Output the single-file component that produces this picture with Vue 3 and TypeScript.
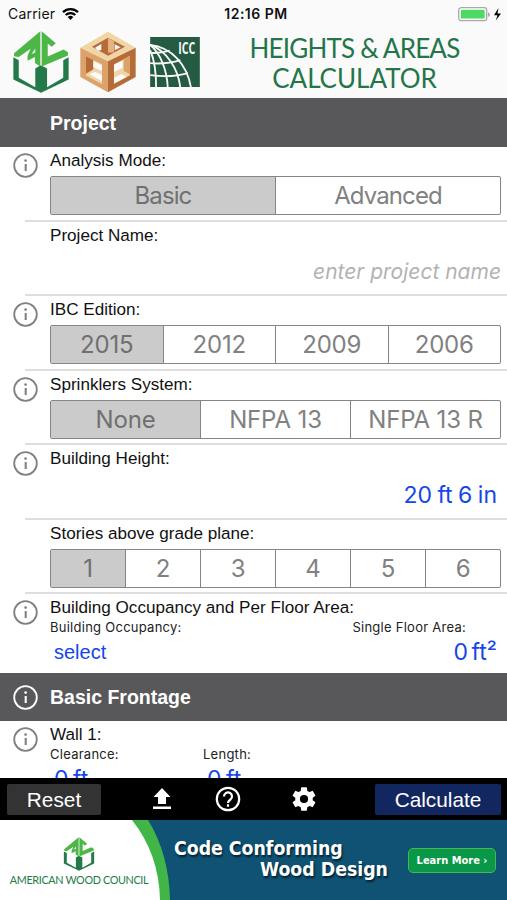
<script setup lang="ts">
interface Row {
  label: string
  info: boolean
  options?: string[]
  value?: string
  placeholder?: string
}
const rows: Row[] = [
  { label: 'Analysis Mode:', info: true, options: ['Basic', 'Advanced'] },
  { label: 'Project Name:', info: false, placeholder: 'enter project name' },
  { label: 'IBC Edition:', info: true, options: ['2015', '2012', '2009', '2006'] },
  { label: 'Sprinklers System:', info: true, options: ['None', 'NFPA 13', 'NFPA 13 R'] },
  { label: 'Building Height:', info: true, value: '20 ft 6 in' },
  { label: 'Stories above grade plane:', info: false, options: ['1', '2', '3', '4', '5', '6'] },
]
</script>

<template>
  <svg class="defs" width="0" height="0" aria-hidden="true">
    <symbol id="info" viewBox="0 0 25 25">
      <circle cx="12.5" cy="12.5" r="11.3" fill="none" stroke="currentColor" stroke-width="1.8" />
      <path d="M12.7 11v7" stroke="currentColor" stroke-width="2.1" />
      <circle cx="12.6" cy="7.6" r="1.3" fill="currentColor" />
    </symbol>
    <symbol id="awc" viewBox="40 94 166 184">
      <path fill="#237a48" d="M41 172 57 181V233L106 261V205L122 196 141 205V261L189 233V181L205 172V238L123 277 41 238Z" />
      <path fill="#4cb748" fill-rule="evenodd" d="M43 169V160L121 95V199L105 189V171L83 182V168L92 147 57 171ZM106 146 95 162 106 158Z" />
      <path fill="#4cb748" d="M125 95 167 130 155 141 143 131V170L190 149 203 157V167L125 199Z" />
    </symbol>
  </svg>
  <div class="screen">
    <div class="status">
      <div class="carrier">
        <span>Carrier</span>
        <svg width="17" height="12" viewBox="0 0 17 12">
          <g fill="none" stroke="#000" stroke-width="2.3">
            <path d="M1 4.2a10.8 10.8 0 0 1 15 0" />
            <path d="M3.7 7a7 7 0 0 1 9.6 0" />
          </g>
          <path d="M5.7 9a4.1 4.1 0 0 1 5.6 0L8.5 12Z" />
        </svg>
      </div>
      <span class="time">12:16 PM</span>
      <svg class="battery" width="44" height="15" viewBox="0 0 44 15">
        <rect x=".7" y=".7" width="28" height="13" rx="2.6" fill="#fff" stroke="#aaa" stroke-width="1.3" />
        <rect x="2.8" y="2.8" width="23.8" height="8.8" rx=".7" fill="#4cd964" />
        <path d="M30 5v5q2-1 2-2.500T30 5Z" fill="#aaa" />
        <path d="M40.500 1 36 8.300h3.500L37.800 13.500 43 6.500H39.500Z" />
      </svg>
    </div>
    <header class="header">
      <svg class="awc" width="56" height="62"><use href="#awc" /></svg>
      <svg class="cube" width="56" height="62" viewBox="240 94 168 184">
        <path fill="#f1d5a4" d="M324 95 407 143 324 184 241 143Z" />
        <path fill="#dca26c" d="M241 143 324 184V277L241 231Z" />
        <path fill="#b66c39" d="M324 184 407 143V231L324 277Z" />
        <path fill="#b66c39" d="M324 113 375 140 324 167 276 140Z" />
        <path fill="#e4b47f" d="M324 113V158L342 157V124Z" />
        <path fill="#fafafa" d="M285 143 304 132V150L294 152ZM344 133 362 142 344 151Z" />
        <path fill="#f1d5a4" d="M258 169 306 193V252L258 227Z" />
        <path fill="#b66c39" d="M258 169 280 180V208L258 221Z" />
        <path fill="#fafafa" d="M280 183 306 196V213L280 202ZM268 223 284 215 306 225V244Z" />
        <path fill="#f1d5a4" d="M342 193 390 168V226L342 252Z" />
        <path fill="#fafafa" d="M342 194 368 182V203L342 216ZM342 233 364 222 381 230 342 250Z" />
        <path fill="#dca26c" d="M371 179 390 168V223L371 213Z" />
      </svg>
      <svg class="icc" width="50" height="50" viewBox="450 110 150 151">
        <path fill="#245b42" d="M450 110H600V261H450Z" />
        <g fill="none" stroke="#fafafa" stroke-width="5.5">
          <path d="M450 134C515 141 562 195 573 262" />
          <path d="M450 134C500 152 534 205 541 262" />
          <path d="M450 134C481 159 501 210 503 262" />
          <path d="M450 150C464 181 468 225 468 262" />
          <path d="M450 158Q478 160 509 151" />
          <path d="M450 189Q500 193 541 180" />
          <path d="M450 225Q513 234 564 219" />
        </g>
        <text x="535" y="160" textLength="51" lengthAdjust="spacingAndGlyphs" class="icc-text">ICC</text>
      </svg>
      <h1 class="title"><span class="t1">HEIGHTS &amp; AREAS</span><span class="t2">CALCULATOR</span></h1>
    </header>

    <main class="form">
      <div class="section"><span>Project</span></div>
      <div v-for="row in rows" :key="row.label" class="row">
        <div class="gutter">
          <svg v-if="row.info" class="info" width="25" height="25"><use href="#info" /></svg>
        </div>
        <div class="content">
          <div class="label">{{ row.label }}</div>
          <div v-if="row.options" class="segments" :class="{ wide: row.options.length === 2 }">
            <div v-for="(o, i) in row.options" :key="o" class="segment" :class="{ active: i === 0 }">{{ o }}</div>
          </div>
          <div v-else-if="row.value" class="value">{{ row.value }}</div>
          <div v-else class="placeholder">{{ row.placeholder }}</div>
        </div>
      </div>
      <div class="row occupancy">
        <div class="gutter"><svg class="info" width="25" height="25"><use href="#info" /></svg></div>
        <div class="content">
          <div class="label">Building Occupancy and Per Floor Area:</div>
          <div class="pair sub"><span>Building Occupancy:</span><span class="single">Single Floor Area:</span></div>
          <div class="pair links"><span class="select">select</span><span class="area">0 ft²</span></div>
        </div>
      </div>
      <div class="section second">
        <svg class="info" width="25" height="25"><use href="#info" /></svg><span>Basic Frontage</span>
      </div>
      <div class="row wall">
        <div class="gutter"><svg class="info" width="25" height="25"><use href="#info" /></svg></div>
        <div class="content">
          <div class="label">Wall 1:</div>
          <div class="walls">
            <div><div class="sub">Clearance:</div><div class="num">0 ft</div></div>
            <div><div class="sub">Length:</div><div class="num">0 ft</div></div>
          </div>
        </div>
      </div>
    </main>

    <nav class="toolbar">
      <div class="btn reset">Reset</div>
      <svg class="upload" width="20" height="22" viewBox="0 0 20 22" fill="#fff"><path d="M10 0 18.500 9H14v7H6V9H1.500ZM1 18.500H19V21H1Z" /></svg>
      <svg class="help" width="26" height="26" viewBox="0 0 26 26" fill="none" stroke="#fff" stroke-width="2.200">
        <circle cx="13" cy="13" r="11.200" />
        <path d="M9 10.500a4 4 0 1 1 6.500 3C14 14.500 13 15 13 17M13 18.300v2.500" />
      </svg>
      <svg class="gear" width="28" height="28" viewBox="0 0 24 24" fill="#fff"><path d="M19.430 12.980c.040-.320.070-.640.070-.980s-.030-.660-.070-.980l2.110-1.650c.190-.150.240-.420.120-.640l-2-3.460c-.120-.220-.390-.300-.610-.220l-2.490 1c-.520-.400-1.080-.730-1.690-.980l-.380-2.650C14.460 2.180 14.250 2 14 2h-4c-.250 0-.460.180-.490.420l-.380 2.650c-.610.250-1.170.590-1.690.980l-2.490-1c-.230-.090-.490 0-.610.220l-2 3.460c-.130.220-.070.490.120.640l2.110 1.650c-.040.320-.070.650-.070.980s.030.660.070.980l-2.110 1.650c-.190.150-.240.420-.120.640l2 3.460c.120.220.390.300.610.220l2.490-1c.520.400 1.080.730 1.690.980l.380 2.650c.030.240.240.420.490.420h4c.250 0 .460-.180.490-.420l.380-2.650c.610-.250 1.170-.590 1.690-.980l2.490 1c.230.090.490 0 .610-.220l2-3.460c.120-.220.070-.490-.120-.640zM12 15.500A3.500 3.500 0 1 1 12 8.500a3.500 3.500 0 0 1 0 7Z" /></svg>
      <div class="btn calc">Calculate</div>
    </nav>

    <footer class="banner">
      <svg class="swoosh" width="507" height="80" viewBox="0 0 507 80">
        <path fill="#0f5273" d="M0 0H507V80H0Z" />
        <path fill="#42b549" d="M0 0H148Q169 34 170 80H0Z" />
        <path fill="#fff" d="M0 0H132Q159 34 160 80H0Z" />
      </svg>
      <div class="brand">
        <svg width="32" height="34"><use href="#awc" /></svg>
        <span>AMERICAN WOOD COUNCIL</span>
      </div>
      <div class="slogan"><span>Code Conforming</span><span class="s2">Wood Design</span></div>
      <div class="learn">Learn More ›</div>
    </footer>
  </div>
</template>

<style>
body { margin: 0; background: #fff; }
</style>

<style scoped>
.defs { display: block; height: 0; }
svg { display: block; flex: none; }
.screen { width: 507px; height: 900px; overflow: hidden; display: flex; flex-direction: column; background: #fff; font-family: "Liberation Sans", Arial, sans-serif; color: #111; white-space: nowrap; }
.status { height: 28px; flex: none; display: grid; grid-template-columns: 1fr auto 1fr; align-items: center; padding: 0 5px 0 8px; background: #fafafa; font: 14px/28px Inter, sans-serif; }
.carrier { display: flex; gap: 7px; align-items: center; letter-spacing: .2px; }
.time { font-weight: 600; letter-spacing: .5px; padding-left: 2px; }
.battery { justify-self: end; }
.header { height: 70px; flex: none; display: flex; background: #fafafa; padding-left: 13px; align-items: flex-start; }
.awc { margin-top: 3px; }
.cube { margin: 3px 0 0 11px; }
.icc { margin: 9px 0 0 14px; }
.icc-text { font: bold 46px "Open Sans", sans-serif; fill: #fafafa; }
.title { margin: 5px 0 0; flex: 1; display: flex; flex-direction: column; align-items: center; font: 400 26px/30px Lato, sans-serif; color: #24764a; padding-left: 2px; }
.t1 { letter-spacing: -.8px; }
.form { height: 680px; flex: none; overflow: hidden; }
.section { height: 49px; background: #58585a; color: #fff; font-weight: 700; font-size: 19.5px; display: flex; align-items: center; padding-left: 50px; padding-top: 1px; box-sizing: border-box; }
.second { padding-left: 13px; padding-top: 0; gap: 12px; height: 48px; }
.row { display: flex; height: 74.5px; }
.gutter { width: 50px; flex: none; padding: 6px 0 0 13px; box-sizing: border-box; color: #808080; }
.content { flex: 1; padding-right: 6px; }
.row:not(.occupancy):not(.wall) { background: linear-gradient(#dedede, #dedede) 25px 100% / 482px 2px no-repeat; }
.label { height: 29px; font-size: 17.1px; line-height: 27px; }
.segments { display: flex; height: 39px; box-sizing: border-box; border: 1px solid #858585; border-radius: 2px; }
.segment { flex: 1; text-align: center; font: 24px/37px Inter, sans-serif; letter-spacing: -.15px; color: #818181; }
.wide .segment { letter-spacing: -.9px; }
.segment + .segment { border-left: 1px solid #858585; }
.segment.active { background: #cbcbcb; color: #707070; }
.value { font: 23px/42px Inter, sans-serif; word-spacing: -1px; text-align: right; padding-right: 4px; color: #1446ea; }
.placeholder { font: italic 21px/42px Inter, sans-serif; text-align: right; color: #b3b3b3; }
.occupancy { height: 79px; }
.occupancy .label, .wall .label { height: 26px; }
.pair { display: flex; justify-content: space-between; }
.sub { font: 13px/15px Inter, sans-serif; letter-spacing: .26px; color: #222; }
.single { padding-right: 35px; }
.links { color: #1446ea; font: 23px/34px Inter, sans-serif; word-spacing: -3px; padding: 0 4px; }
.select { font: 20px/34px "Liberation Sans", sans-serif; }
.walls { display: flex; }
.walls > div { width: 153px; }
.num { color: #1446ea; font: 23px/34px Inter, sans-serif; word-spacing: -2px; padding-left: 4px; }
.toolbar { height: 42px; flex: none; background: #000; display: flex; align-items: center; padding: 0 6px 0 7px; color: #fff; }
.btn { height: 31px; line-height: 31px; text-align: center; font-size: 20.8px; border-radius: 2px; }
.reset { width: 94px; background: #333; }
.calc { width: 126px; margin-left: auto; background: #12265f; }
.upload { margin-left: 51px; }
.help { margin-left: 43px; }
.gear { margin-left: 49px; }
.banner { height: 80px; flex: none; position: relative; display: flex; color: #fff; }
.swoosh { position: absolute; inset: 0; }
.brand { position: relative; width: 158px; margin-right: 2px; display: flex; flex-direction: column; align-items: center; padding-top: 17px; gap: 2px; font: 10.8px/14px Lato, sans-serif; letter-spacing: -.35px; color: #237a48; }
.slogan { position: relative; width: 248px; display: flex; flex-direction: column; padding: 18px 0 0 14px; box-sizing: border-box; font: bold 19.3px/21px "DejaVu Sans Condensed", "DejaVu Sans", sans-serif; font-stretch: condensed; text-shadow: 1px 2px 2px #04202f; }
.s2 { padding-left: 86px; }
.learn { position: relative; width: 88px; height: 25px; box-sizing: border-box; margin-top: 28px; border: 1px solid #49b555; border-radius: 5px; background: #089847; text-align: center; font: bold 11px/23px "DejaVu Sans Condensed", "DejaVu Sans", sans-serif; font-stretch: condensed; }
</style>
